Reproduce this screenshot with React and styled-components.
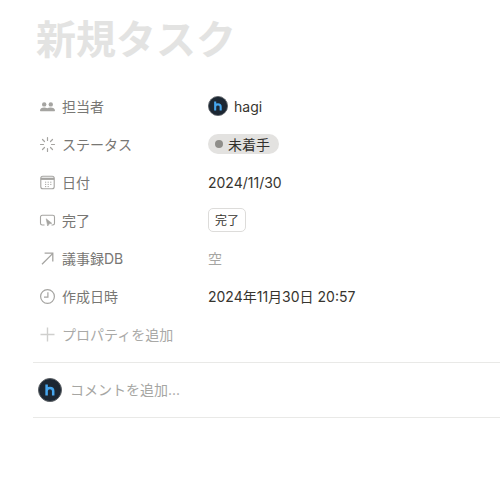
import styled, { createGlobalStyle } from 'styled-components'

const GlobalStyle = createGlobalStyle`
	html, body {
		margin: 0;
		padding: 0;
		background: #fff;
	}
	body {
		font-family: Inter, "Noto Sans CJK JP", "Liberation Sans", sans-serif;
		-webkit-font-smoothing: antialiased;
	}
`;

const Page = styled("div")`
	width: 500px;
	height: 486px;
	overflow: hidden;
	padding-left: 33px;
	box-sizing: border-box;
`;

const Title = styled("h1")`
	margin: 0;
	padding: 16px 0 0 3px;
	height: 87px;
	box-sizing: border-box;
	font-size: 40px;
	line-height: 48px;
	font-weight: 700;
	color: #e3e3e2;
`;

const Properties = styled("div")`
	display: flex;
	flex-direction: column;
`;

const Row = styled("div")`
	display: grid;
	grid-template-columns: 175px 1fr;
	align-items: center;
	height: 38px;
`;

const Label = styled("div")`
	display: flex;
	align-items: center;
	gap: 6px;
	padding-left: 6px;
	font-size: 14px;
	color: ${(p) => (p.$faint ? "#a9a9a7" : "#787774")};

	svg {
		flex: none;
		width: 17px;
		height: 17px;
		color: ${(p) => (p.$faint ? "#cfcfcd" : "#a5a4a1")};
	}
`;

const Value = styled("div")`
	display: flex;
	align-items: center;
	gap: 6px;
	font-size: 14px;
	color: ${(p) => (p.$empty ? "#a6a6a3" : "#37352f")};
`;

const Status = styled("span")`
	display: inline-flex;
	align-items: center;
	gap: 5px;
	height: 20px;
	padding: 0 9px 0 7px;
	border-radius: 10px;
	background: #e3e2e0;
	color: #32302c;
	font-size: 14px;
`;

const Dot = styled("span")`
	width: 8px;
	height: 8px;
	border-radius: 50%;
	background: #8f8e8a;
`;

const DoneButton = styled("span")`
	display: inline-flex;
	align-items: center;
	justify-content: center;
	width: 38px;
	height: 24px;
	padding-bottom: 2px;
	box-sizing: border-box;
	border: 1px solid #dddcda;
	border-radius: 5px;
	font-size: 12px;
	color: #37352f;
`;

const Avatar = styled("span")`
	display: inline-flex;
	width: ${(p) => p.$size}px;
	height: ${(p) => p.$size}px;

	svg {
		width: 100%;
		height: 100%;
	}
`;

const CommentBar = styled("div")`
	display: flex;
	align-items: center;
	gap: 8px;
	height: 56px;
	margin-top: 9px;
	padding-left: 5px;
	box-sizing: border-box;
	border-top: 1px solid #e9e9e7;
	border-bottom: 1px solid #e9e9e7;
	font-size: 14px;
	color: #a6a6a3;
`;

const CommentText = styled("span")`
	padding-bottom: 3px;
`;

const HLogo = () => (
	<svg viewBox="0 0 24 24">
		<circle cx="12" cy="12" r="11.5" fill="#1c2733" stroke="#5f6367" strokeWidth="1" />
		<path d="M8.6 6.5v11M8.6 13c0-2 1.4-3 3.3-3s3.3 1 3.3 3v4.5" fill="none" stroke="#46a6ee" strokeWidth="2.5" />
	</svg>
);

const PeopleIcon = () => (
	<svg viewBox="0 0 17 17" fill="currentColor">
		<circle cx="5.2" cy="6.4" r="2.2" />
		<circle cx="11.8" cy="6.4" r="2.2" />
		<path d="M1 12.6c0-2 1.8-3.2 4.2-3.2 1.2 0 2.2.3 3 .9.8-.6 1.9-.9 3.4-.9 2.4 0 4.4 1.2 4.4 3.2 0 .4-.2.6-.6.6H1.6c-.4 0-.6-.2-.6-.6z" />
	</svg>
);

const StatusIcon = () => (
	<svg viewBox="0 0 17 17" fill="none" stroke="currentColor" strokeWidth="1.2" strokeLinecap="round">
		<path d="M8.5 1.5v3M8.5 12.5v3M1.5 8.5h3M12.5 8.5h3M3.5 3.5l2 2M11.5 11.5l2 2M3.5 13.5l2-2M11.5 5.5l2-2" />
	</svg>
);

const CalendarIcon = () => (
	<svg viewBox="0 0 17 17" fill="none" stroke="currentColor">
		<rect x="1.8" y="2.2" width="13.4" height="12.6" rx="2" strokeWidth="1.1" />
		<path d="M1.8 4.8h13.4" strokeWidth="2.2" />
		<path d="M6 8.2h1.2M8.6 8.2h1.2M11.2 8.2h1.2M6 10.4h1.2M8.6 10.4h1.2M11.2 10.4h1.2M6 12.6h1.2M8.6 12.6h1.2" strokeWidth="1" />
	</svg>
);

const ButtonIcon = () => (
	<svg viewBox="0 0 17 17" fill="none" stroke="currentColor" strokeWidth="1.1">
		<path d="M5.5 13H3.2c-1 0-1.7-.7-1.7-1.7V5c0-1 .7-1.7 1.7-1.7h10.6c1 0 1.7.7 1.7 1.7v6.3c0 1-.7 1.7-1.7 1.7h-1.3" />
		<path d="M7.2 6.8l1.5 7.2 1.5-2.2 2.6-.5z" fill="currentColor" strokeWidth=".6" />
	</svg>
);

const ArrowIcon = () => (
	<svg viewBox="0 0 17 17" fill="none" stroke="currentColor" strokeWidth="1.3">
		<path d="M3 14.2L13.6 3.6M5.6 3.2h8.2v8.2" />
	</svg>
);

const ClockIcon = () => (
	<svg viewBox="0 0 17 17" fill="none" stroke="currentColor" strokeWidth="1.2">
		<circle cx="8.5" cy="8.5" r="6.9" />
		<path d="M8.9 4.3v4.9H5" />
	</svg>
);

const PlusIcon = () => (
	<svg viewBox="0 0 17 17" fill="none" stroke="currentColor" strokeWidth="1.4">
		<path d="M8.5 1.5v14M1.5 8.5h14" />
	</svg>
);

const App = () => {
	return (
		<Page>
			<GlobalStyle />
			<Title>新規タスク</Title>
			<Properties>
				<Row>
					<Label><PeopleIcon />担当者</Label>
					<Value>
						<Avatar $size={20}><HLogo /></Avatar>
						hagi
					</Value>
				</Row>
				<Row>
					<Label><StatusIcon />ステータス</Label>
					<Value>
						<Status><Dot />未着手</Status>
					</Value>
				</Row>
				<Row>
					<Label><CalendarIcon />日付</Label>
					<Value>2024/11/30</Value>
				</Row>
				<Row>
					<Label><ButtonIcon />完了</Label>
					<Value>
						<DoneButton>完了</DoneButton>
					</Value>
				</Row>
				<Row>
					<Label><ArrowIcon />議事録DB</Label>
					<Value $empty>空</Value>
				</Row>
				<Row>
					<Label><ClockIcon />作成日時</Label>
					<Value>2024年11月30日 20:57</Value>
				</Row>
				<Row>
					<Label $faint><PlusIcon />プロパティを追加</Label>
				</Row>
			</Properties>
			<CommentBar>
				<Avatar $size={24}><HLogo /></Avatar>
				<CommentText>コメントを追加...</CommentText>
			</CommentBar>
		</Page>
	)
}

export default App;
